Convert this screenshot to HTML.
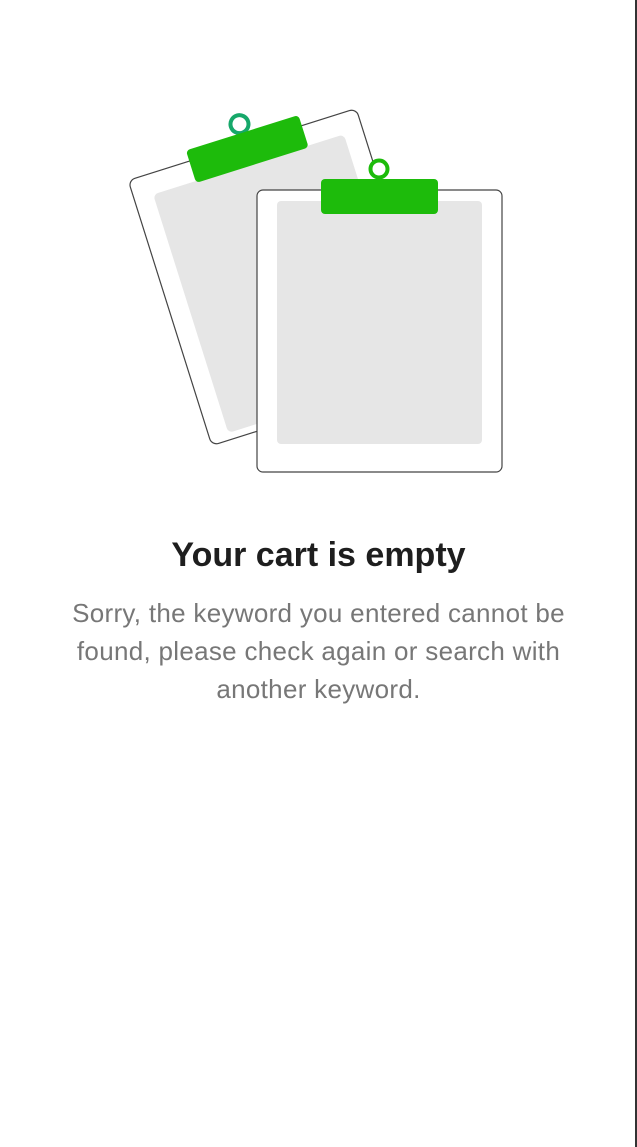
<!DOCTYPE html>
<html><head><meta charset="utf-8"><style>
html,body{margin:0;padding:0;background:#fff;}
body{width:637px;height:1147px;position:relative;overflow:hidden;font-family:"Liberation Sans",sans-serif;}
.edge{position:absolute;right:0;top:0;width:2px;height:1147px;background:#333;}
svg{position:absolute;left:0;top:0;}
h1{position:absolute;left:0;width:637px;top:533px;margin:0;text-align:center;font-size:34px;font-weight:bold;color:#1e1e1e;line-height:44px;}
.p{position:absolute;left:0;width:637px;top:594px;text-align:center;font-size:26px;color:#777;line-height:38px;letter-spacing:0.3px;}
</style></head><body>
<svg width="637" height="520" viewBox="0 0 637 520">
<g transform="translate(284,277) rotate(-17.5)">
<rect x="-119.5" y="-139" width="239" height="278" rx="7" fill="#fff" stroke="#444" stroke-width="1.2"/>
<rect x="-100" y="-118" width="200" height="250" rx="5" fill="#e6e6e6"/>
</g>
<g transform="translate(247,148) rotate(-17.5)">
<circle cx="0" cy="-25" r="9" fill="none" stroke="#16a86a" stroke-width="4"/>
<rect x="-59" y="-16" width="118" height="34" rx="4" fill="#1dbb0b"/>
</g>
<rect x="257" y="190" width="245" height="282" rx="6" fill="#fff" stroke="#444" stroke-width="1.2"/>
<rect x="277" y="201" width="205" height="243" rx="4" fill="#e6e6e6"/>
<circle cx="379" cy="169" r="8.5" fill="#fff" stroke="#1dbb0b" stroke-width="4"/>
<rect x="321" y="179" width="117" height="35" rx="4" fill="#1dbb0b"/>
</svg>
<h1>Your cart is empty</h1>
<div class="p">Sorry, the keyword you entered cannot be<br>found, please check again or search with<br>another keyword.</div>
<div class="edge"></div>
</body></html>
